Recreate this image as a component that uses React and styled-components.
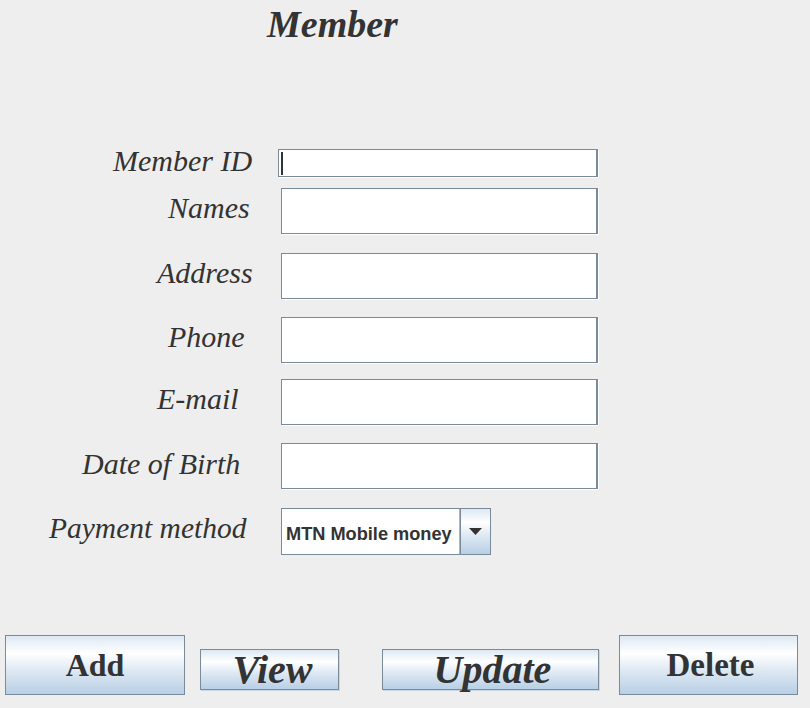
import React from "react";
import styled, { createGlobalStyle } from "styled-components";

const Global = createGlobalStyle`
  html, body { margin: 0; padding: 0; background: #eeeeee; }
  body { font-family: "Liberation Serif", serif; color: #333333; }
`;

const Frame = styled.div`
  width: 810px;
  height: 708px;
  background: #eeeeee;
  overflow: hidden;
  display: flex;
  flex-direction: column;
`;

const Title = styled.h1`
  margin: 0;
  padding: 5px 0 0 267px;
  font-family: "Liberation Serif", serif;
  font-weight: bold;
  font-style: italic;
  font-size: 38px;
  line-height: 38px;
  color: #333333;
`;

const Form = styled.div`
  display: flex;
  flex-direction: column;
  margin-top: 103px;
`;

const Row = styled.div`
  display: grid;
  grid-template-columns: 278px auto;
  align-items: start;
  margin-top: ${(p) => p.$gap}px;
`;

const Label = styled.label`
  padding-left: ${(p) => p.$x}px;
  margin-top: ${(p) => p.$dy}px;
  font-family: "Liberation Serif", serif;
  font-style: italic;
  font-size: ${(p) => p.$size || 30}px;
  line-height: 30px;
  color: #333333;
  white-space: nowrap;
`;

const Field = styled.div`
  box-sizing: border-box;
  margin-left: ${(p) => p.$x}px;
  margin-top: ${(p) => p.$dy || 0}px;
  width: ${(p) => p.$w}px;
  height: ${(p) => p.$h}px;
  background: #ffffff;
  border: 1px solid #7a8a99;
  border-right-width: 2px;
  box-shadow: 1px 1px 0 #ffffff;
  padding: 2px 0 0 2px;
`;

const Caret = styled.span`
  display: block;
  width: 2px;
  height: 23px;
  background: #333333;
`;

const Combo = styled.div`
  box-sizing: border-box;
  margin-left: 3px;
  width: 210px;
  height: 47px;
  display: flex;
  border: 1px solid #7a8a99;
  background: #ffffff;
`;

const ComboText = styled.div`
  flex: 1;
  display: flex;
  align-items: center;
  padding: 5px 0 0 4px;
  font-family: "Liberation Sans", Arial, sans-serif;
  font-weight: bold;
  font-size: 18.2px;
  color: #333333;
  white-space: nowrap;
  border-right: 1px solid #a3b8cc;
`;

const gradient = `linear-gradient(to bottom, #dde8f3 0%, #ffffff 30%, #dde8f3 60%, #b8cfe5 100%)`;

const ArrowButton = styled.div`
  width: 29px;
  display: flex;
  align-items: center;
  justify-content: center;
  background: ${gradient};
  border-left: 1px solid #7a8a99;
`;

const Buttons = styled.div`
  display: flex;
  align-items: flex-start;
  padding-left: 5px;
  margin-top: 80px;
`;

const Button = styled.button`
  box-sizing: border-box;
  width: ${(p) => p.$w}px;
  height: ${(p) => p.$h}px;
  margin-left: ${(p) => p.$ml || 0}px;
  margin-top: ${(p) => p.$mt || 0}px;
  padding: 0 0 0 ${(p) => p.$pl || 0}px;
  border: 1px solid #7a8a99;
  border-radius: 0;
  background: ${gradient};
  box-shadow: ${(p) => (p.$shadow ? "1px 1px 0 #c9d6e3" : "none")};
  font-family: "Liberation Serif", serif;
  font-weight: bold;
  font-style: ${(p) => (p.$italic ? "italic" : "normal")};
  font-size: ${(p) => p.$size}px;
  color: #333333;
  display: flex;
  align-items: center;
  justify-content: center;
  cursor: pointer;
`;

const rows = [
  { label: "Member ID", x: 113, gap: 0, dy: 0, fdy: 3, fx: 0, w: 320, h: 28, caret: true },
  { label: "Names", x: 168, gap: 11, dy: 5, fx: 3, w: 317, h: 46 },
  { label: "Address", x: 157, gap: 19, dy: 5, fx: 3, w: 317, h: 46 },
  { label: "Phone", x: 168, gap: 18, dy: 5, fx: 3, w: 317, h: 46 },
  { label: "E-mail", x: 157, gap: 16, dy: 5, fx: 3, w: 317, h: 46 },
  { label: "Date of Birth", x: 82, gap: 18, dy: 6, fx: 3, w: 317, h: 46 },
];

export default function App() {
  return (
    <Frame>
      <Global />
      <Title>Member</Title>
      <Form>
        {rows.map((r) => (
          <Row key={r.label} $gap={r.gap}>
            <Label $x={r.x} $dy={r.dy}>{r.label}</Label>
            <Field $x={r.fx} $dy={r.fdy} $w={r.w} $h={r.h}>
              {r.caret && <Caret />}
            </Field>
          </Row>
        ))}
        <Row $gap={19}>
          <Label $x={49} $dy={5} $size={29.5}>Payment method</Label>
          <Combo>
            <ComboText>MTN Mobile money</ComboText>
            <ArrowButton>
              <svg width="13" height="7" viewBox="0 0 13 7">
                <polygon points="0,0 13,0 6.5,7" fill="#333333" />
              </svg>
            </ArrowButton>
          </Combo>
        </Row>
      </Form>
      <Buttons>
        <Button $w={180} $h={60} $size={32}>Add</Button>
        <Button $w={139} $h={41} $ml={15} $mt={14} $size={40} $italic $shadow $pl={6}>View</Button>
        <Button $w={217} $h={41} $ml={43} $mt={14} $size={40} $italic $shadow $pl={4}>Update</Button>
        <Button $w={179} $h={60} $ml={20} $size={33} $pl={4}>Delete</Button>
      </Buttons>
    </Frame>
  );
}
